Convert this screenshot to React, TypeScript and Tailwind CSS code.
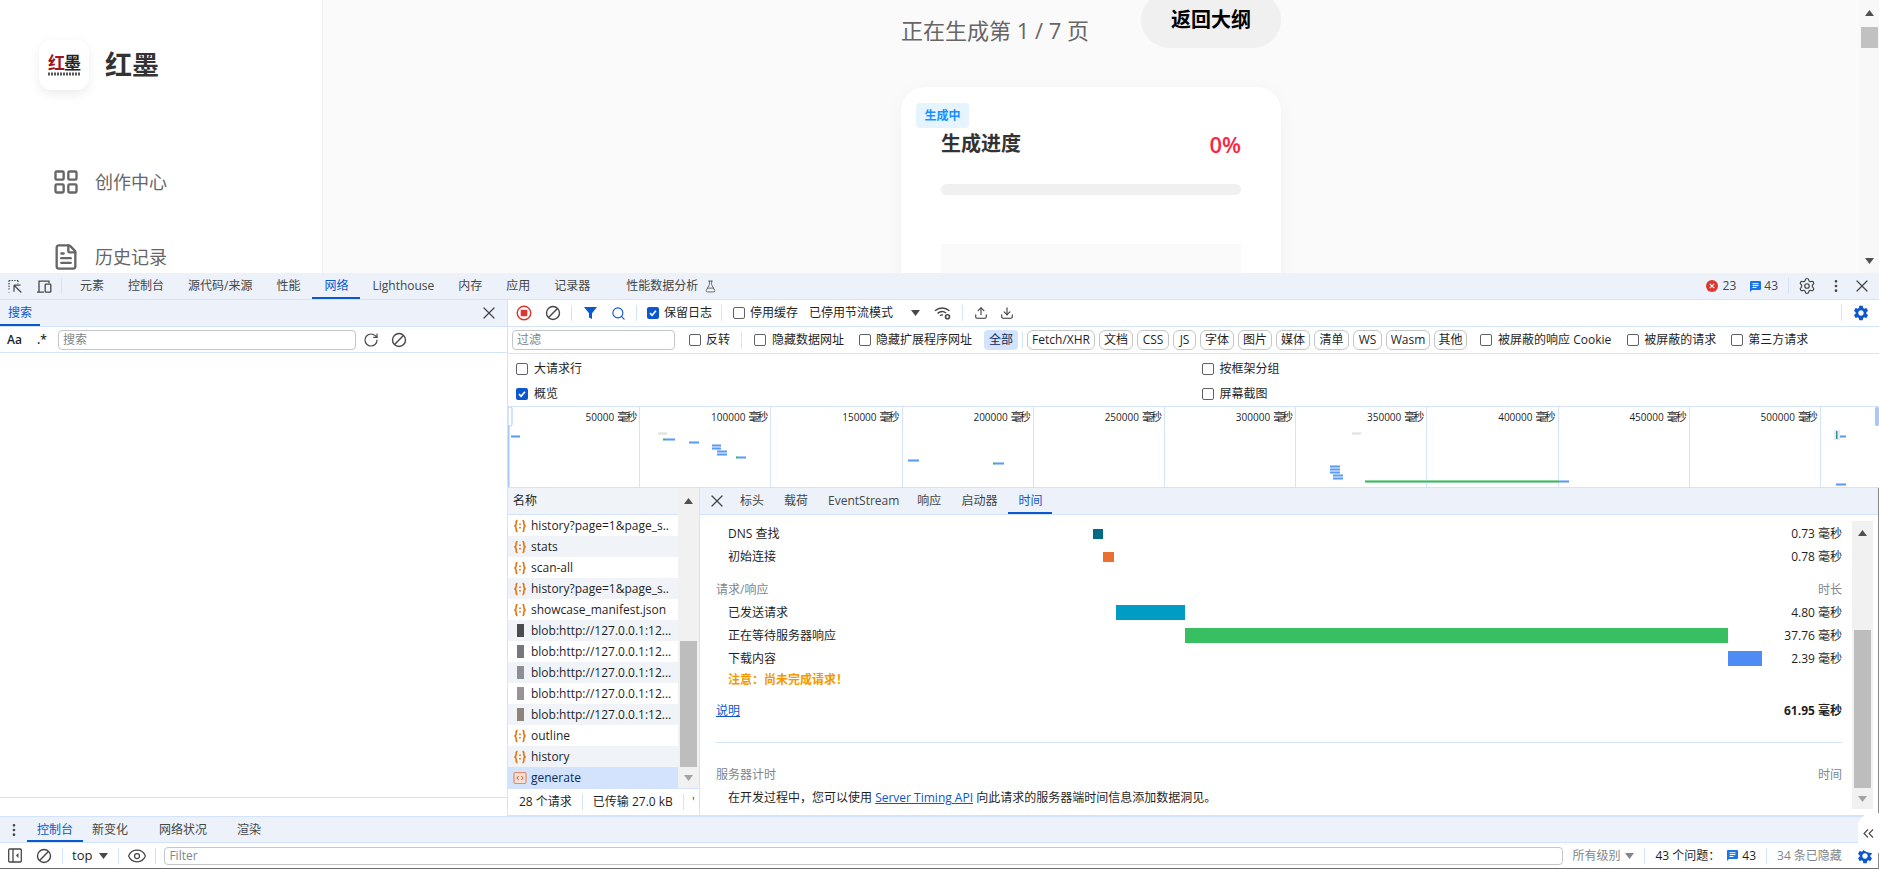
import React from 'react';
import { LayoutGrid, FileText, Settings, X, EllipsisVertical, Search, Upload, Download, RotateCw, Eye, FlaskConical } from 'lucide-react';
import { MdSettings } from 'react-icons/md';

const Check = ({ on = false, cls = '' }: { on?: boolean; cls?: string }) => (
  on ? (
    <span className={`flex h-[12px] w-[12px] shrink-0 items-center justify-center rounded-[2px] bg-[#0b57d0] ${cls}`}>
      <svg width="10" height="10" viewBox="0 0 11 11"><path d="M2.2 5.6 4.5 8l4.2-5" fill="none" stroke="#fff" strokeWidth="1.8" /></svg>
    </span>
  ) : (
    <span className={`block h-[12px] w-[12px] shrink-0 rounded-[2px] border border-[#5f6368] bg-white ${cls}`} />
  )
);

const Div = ({ cls = '' }: { cls?: string }) => <span className={`block h-4 w-px shrink-0 bg-[#d3e3fd] ${cls}`} />;

const Ban = ({ cls = '' }: { cls?: string }) => (
  <svg className={`shrink-0 ${cls}`} width="16" height="16" viewBox="0 0 16 16" fill="none" stroke="#474747" strokeWidth="1.4">
    <circle cx="8" cy="8" r="6.5" /><path d="M3.6 12.6 12.4 3.4" />
  </svg>
);

const Caret = ({ cls = '', color = '#474747' }: { cls?: string; color?: string }) => (
  <svg className={`shrink-0 ${cls}`} width="9" height="6" viewBox="0 0 9 6"><path d="M0 0h9L4.5 6z" fill={color} /></svg>
);

const Chat = ({ cls = '' }: { cls?: string }) => (
  <svg className={`shrink-0 ${cls}`} width="11" height="11" viewBox="0 0 11 11">
    <path d="M0 1a1 1 0 0 1 1-1h9a1 1 0 0 1 1 1v7a1 1 0 0 1-1 1H2l-2 2z" fill="#1a73e8" />
    <path d="M2.5 2.7h6M2.5 4.6h6M2.5 6.5h4" stroke="#fff" strokeWidth="1" />
  </svg>
);

const Xhr = () => (
  <svg className="shrink-0" width="14" height="14" viewBox="0 0 14 14" fill="none" stroke="#e8710a" strokeWidth="1.6">
    <path d="M4.6 1.5C2.8 1.5 3.2 3.2 3.2 4.6 3.2 6 2.6 6.8 1.4 7c1.2.2 1.8 1 1.8 2.4s-.4 3.1 1.4 3.1" />
    <path d="M9.4 1.5c1.8 0 1.4 1.7 1.4 3.1 0 1.4.6 2.2 1.8 2.4-1.2.2-1.8 1-1.8 2.4s.4 3.1-1.4 3.1" />
    <path d="M7 4.6v1.4M7 8v1.4" stroke="#e8710a" strokeWidth="1.6" />
  </svg>
);

const Gen = () => (
  <svg className="shrink-0" width="14" height="14" viewBox="0 0 14 14" fill="none">
    <rect x="1" y="1.5" width="12" height="11" rx="1.5" fill="#f6e0d5" stroke="#e58a63" strokeWidth="1.2" />
    <path d="M5.6 5 3.8 7l1.8 2M8.4 5l1.8 2-1.8 2" stroke="#c9582b" strokeWidth="1" />
  </svg>
);

const Thumb = ({ cls }: { cls: string }) => <span className={`ml-[4px] mr-[7px] block h-[13px] w-[7px] shrink-0 ${cls}`} />;

const topTabs = ['元素', '控制台', '源代码/来源', '性能', '网络', 'Lighthouse', '内存', '应用', '记录器'];

const pills = [
  { t: 'Fetch/XHR', w: 'w-[68px]' },
  { t: '文档', w: 'w-[34px]' },
  { t: 'CSS', w: 'w-[32px]' },
  { t: 'JS', w: 'w-[23px]' },
  { t: '字体', w: 'w-[34px]' },
  { t: '图片', w: 'w-[34px]' },
  { t: '媒体', w: 'w-[34px]' },
  { t: '清单', w: 'w-[35px]' },
  { t: 'WS', w: 'w-[29px]' },
  { t: 'Wasm', w: 'w-[44px]' },
  { t: '其他', w: 'w-[33px]' },
];

const marks = ['50000', '100000', '150000', '200000', '250000', '300000', '350000', '400000', '450000', '500000'];

const B = 'b';
const bars: [number, number, number, string][] = [
  [511, 9, 435, B], [658, 9, 432, 'x'], [663, 2, 438, 'g'], [665, 10, 438, B], [689, 10, 441, B],
  [712, 9, 444, B], [712, 9, 447, B], [717, 10, 450, B], [717, 10, 453, B], [736, 2, 456, 'g'], [738, 8, 456, B],
  [908, 11, 459, B], [993, 2, 462, 'g'], [995, 9, 462, B], [1352, 9, 432, 'x'],
  [1330, 10, 465, B], [1330, 10, 468, B], [1330, 10, 471, B], [1333, 10, 474, B], [1333, 10, 477, B],
  [1365, 194, 480, 'g'], [1559, 10, 480, B], [1836, 10, 483, B], [1840, 6, 435, B],
];
const barBg = (k: string) => (k === 'b' ? '#a9c9fb' : k === 'g' ? '#8fd8a4' : '#ececec');
const barFg = (k: string) => (k === 'b' ? '#5b9bf8' : k === 'g' ? '#3fb45e' : '#e2e2e2');

type Row = { t: string; k: 'xhr' | 'blob' | 'gen'; th?: string };
const rows: Row[] = [
  { t: 'history?page=1&page_s..', k: 'xhr' },
  { t: 'stats', k: 'xhr' },
  { t: 'scan-all', k: 'xhr' },
  { t: 'history?page=1&page_s..', k: 'xhr' },
  { t: 'showcase_manifest.json', k: 'xhr' },
  { t: 'blob:http://127.0.0.1:12...', k: 'blob', th: 'bg-[#4a4a4f]' },
  { t: 'blob:http://127.0.0.1:12...', k: 'blob', th: 'bg-[#77777d]' },
  { t: 'blob:http://127.0.0.1:12...', k: 'blob', th: 'bg-[#8d8d94]' },
  { t: 'blob:http://127.0.0.1:12...', k: 'blob', th: 'bg-[#9a9298]' },
  { t: 'blob:http://127.0.0.1:12...', k: 'blob', th: 'bg-[#8f8278]' },
  { t: 'outline', k: 'xhr' },
  { t: 'history', k: 'xhr' },
  { t: 'generate', k: 'gen' },
];

const rowBg = (i: number, sel: boolean) => (sel ? 'bg-[#d3e3fd] text-[#0a2a5c]' : i % 2 === 0 ? 'bg-white' : 'bg-[#f0f4f9]');

const VBar = ({ cls, thumb, up, down }: { cls: string; thumb: string; up: string; down: string }) => (
  <div className={`flex shrink-0 flex-col items-center bg-[#f1f1f1] ${cls}`}>
    <div className={`flex w-full items-center justify-center ${up}`}>
      <Caret cls="rotate-180" color="#505050" />
    </div>
    <div className="flex-1" />
    <div className={`w-[17px] bg-[#bdbdbd] ${thumb}`} />
    <div className={`flex w-full items-center justify-center ${down}`}>
      <Caret color="#a3a3a3" />
    </div>
  </div>
);

export default function App() {
  return (
    <div className="relative flex h-[869px] w-[1879px] flex-col overflow-hidden bg-white font-['Open_Sans','Noto_Sans_CJK_SC',sans-serif] text-[12px] text-[#1f1f1f]">
      {/* page */}
      <div className="flex h-[273px] shrink-0 overflow-hidden">
        <aside className="w-[323px] shrink-0 border-r border-[#f0f0f0] bg-white pl-[39px] pt-[40px]">
          <div className="flex items-center">
            <div className="flex h-[50px] w-[50px] flex-col items-center justify-center rounded-[12px] bg-white shadow-[0_4px_12px_rgba(0,0,0,0.08)]">
              <div className="flex h-[17px] items-center text-[17px] font-bold leading-none tracking-[-1px]">
                <span className="text-[#a3161f]">红</span><span className="text-[#222]">墨</span>
              </div>
              <svg width="33" height="4" viewBox="0 0 33 4" className="mt-[1px]"><path d="M0 2h33" stroke="#555" strokeWidth="3" strokeDasharray="2 1" /></svg>
            </div>
            <div className="ml-[16px] text-[27px] font-semibold leading-[34px] text-[#333]">红墨</div>
          </div>
          <div className="ml-[13px] mt-[76px] flex h-[32px] items-center text-[#666]">
            <LayoutGrid size={28} strokeWidth={2} className="shrink-0" />
            <span className="ml-[15px] text-[18px]">创作中心</span>
          </div>
          <div className="ml-[13px] mt-[43px] flex h-[32px] items-center text-[#666]">
            <FileText size={28} strokeWidth={2} className="shrink-0" />
            <span className="ml-[15px] text-[18px]">历史记录</span>
          </div>
        </aside>
        <main className="min-w-0 flex-1 bg-[#fafafa]">
          <div className="mx-auto w-[380px]">
            <div className="-mt-[8px] flex h-[56px] items-start justify-between">
              <div className="mt-[23px] text-[22px] leading-[30px] text-[#666]">正在生成第 1 / 7 页</div>
              <div className="flex h-[56px] w-[140px] items-center justify-center rounded-full bg-[#f0f0f0] text-[20px] font-bold text-black">返回大纲</div>
            </div>
            <div className="relative mt-[39px] h-[300px] rounded-[24px] bg-white px-10 pt-[43px] shadow-[0_4px_20px_rgba(0,0,0,0.04)]">
              <span className="absolute left-[15px] top-[16px] flex h-[25px] w-[53px] items-center justify-center rounded-[4px] bg-[#e6f4ff] text-[12px] font-semibold text-[#1890ff]">生成中</span>
              <div className="flex h-[28px] items-center justify-between">
                <span className="text-[20px] font-semibold text-[#333]">生成进度</span>
                <span className="text-[22px] font-semibold text-[#ff2442]">0%</span>
              </div>
              <div className="mt-[26px] h-[11px] rounded-full bg-[#f0f0f0]" />
              <div className="mt-[49px] h-[100px] bg-[#fafafa]" />
            </div>
          </div>
        </main>
        <div className="flex w-[20px] shrink-0 flex-col items-center bg-[#f8f8f8]">
          <div className="flex h-[25px] items-center justify-center"><Caret cls="rotate-180" color="#505050" /></div>
          <div className="mt-[2px] h-[21px] w-[17px] bg-[#c1c1c1]" />
          <div className="flex-1" />
          <div className="flex h-[25px] items-center justify-center"><Caret color="#505050" /></div>
        </div>
      </div>

      {/* devtools tabs */}
      <div className="flex h-[27px] shrink-0 items-stretch border-b border-[#d3e3fd] bg-[#ecf1fa] text-[#444746]">
        <div className="flex items-center pl-[8px]">
          <svg width="15" height="15" viewBox="0 0 15 15" fill="none" stroke="#474747" strokeWidth="1.2">
            <path d="M1 1.5h9M1 1.5v9M1 13v.5M10 1.5v3" strokeDasharray="1.4 1.2" />
            <path d="M6 6.2h6.5M6 6.2v6.5M6.3 6.5l7 7" />
          </svg>
          <svg className="ml-[13px]" width="16" height="15" viewBox="0 0 16 15" fill="none" stroke="#474747" strokeWidth="1.3">
            <path d="M1 13.2h7M3 13V2.2h10v2" />
            <rect x="9.2" y="5.2" width="5.6" height="8" rx=".6" />
          </svg>
          <Div cls="ml-[9px]" />
        </div>
        <div className="ml-[6px] flex items-stretch">
          {topTabs.map((t) => (
            <div key={t} className={`flex items-center px-3 ${t === '网络' ? 'border-b-2 border-[#0b57d0] pt-[2px] text-[#0b57d0]' : ''}`}>{t}</div>
          ))}
          <div className="ml-[24px] flex items-center">性能数据分析<FlaskConical size={13} strokeWidth={1.4} className="ml-[6px]" /></div>
        </div>
        <div className="ml-auto flex items-center pr-[7px]">
          <svg width="12" height="12" viewBox="0 0 12 12"><circle cx="6" cy="6" r="6" fill="#dc362e" /><path d="M3.8 3.8l4.4 4.4M8.2 3.8 3.8 8.2" stroke="#fff" strokeWidth="1.1" /></svg>
          <span className="ml-[5px]">23</span>
          <Chat cls="ml-[14px]" />
          <span className="ml-[3px]">43</span>
          <Div cls="ml-[10px]" />
          <Settings size={18} strokeWidth={1.6} className="ml-[9px]" />
          <EllipsisVertical size={16} strokeWidth={2} className="ml-[12px]" />
          <X size={20} strokeWidth={1.5} className="ml-[8px]" />
        </div>
      </div>

      {/* devtools body */}
      <div className="flex h-[516px] shrink-0">
        {/* search drawer */}
        <div className="flex w-[508px] shrink-0 flex-col border-r border-[#d3e3fd]">
          <div className="flex h-[27px] shrink-0 items-stretch justify-between border-b border-[#d3e3fd] bg-[#ecf1fa] pr-[8px]">
            <span className="flex w-[40px] items-center justify-center border-b-2 border-[#0b57d0] pt-[2px] text-[#0b57d0]">搜索</span>
            <span className="flex items-center"><X size={20} strokeWidth={1.5} className="text-[#474747]" /></span>
          </div>
          <div className="flex h-[26px] shrink-0 items-center border-b border-[#d3e3fd] pl-[7px]">
            <span className="w-[16px] font-semibold">Aa</span>
            <span className="ml-[14px] w-[11px] font-semibold">.*</span>
            <div className="ml-[10px] flex h-[20px] w-[298px] items-center rounded-[4px] border border-[#c4c7c5] pl-[4px] text-[#80868b]">搜索</div>
            <RotateCw size={16} strokeWidth={1.8} className="ml-[7px] text-[#474747]" />
            <Ban cls="ml-[12px]" />
          </div>
          <div className="flex-1" />
          <div className="h-[19px] shrink-0 border-t border-[#d3e3fd]" />
        </div>

        {/* network */}
        <div className="flex min-w-0 flex-1 flex-col">
          <div className="flex h-[27px] shrink-0 items-center border-b border-[#d3e3fd] pl-[8px] pr-[9px]">
            <svg className="shrink-0" width="16" height="16" viewBox="0 0 16 16"><circle cx="8" cy="8" r="6.8" fill="none" stroke="#dc362e" strokeWidth="1.4" /><rect x="4.7" y="4.7" width="6.6" height="6.6" rx="1" fill="#dc362e" /></svg>
            <Ban cls="ml-[13px]" />
            <Div cls="ml-[10px]" />
            <svg className="ml-[12px] shrink-0" width="13" height="14" viewBox="0 0 13 14"><path d="M0 1h13L8 7.2V13l-3-1.5V7.2z" fill="#0b57d0" /></svg>
            <Search size={15} strokeWidth={1.8} className="ml-[14px] shrink-0 text-[#0b57d0]" />
            <Div cls="ml-[10px]" />
            <Check on cls="ml-[10px]" />
            <span className="ml-[5px] whitespace-nowrap">保留日志</span>
            <Div cls="ml-[9px]" />
            <Check cls="ml-[11px]" />
            <span className="ml-[5px] whitespace-nowrap">停用缓存</span>
            <span className="ml-[11px] whitespace-nowrap">已停用节流模式</span>
            <Caret cls="ml-[18px]" />
            <svg className="ml-[14px] shrink-0" width="17" height="14" viewBox="0 0 17 14" fill="none" stroke="#474747" strokeWidth="1.4">
              <path d="M1 4.8a10.5 10.5 0 0 1 14.4 0M3.6 7.4a7 7 0 0 1 8.6-.4M6 9.8a3.4 3.4 0 0 1 3-.8" />
              <circle cx="13.5" cy="10.8" r="2" strokeWidth="1.6" />
            </svg>
            <Div cls="ml-[11px]" />
            <Upload size={14} strokeWidth={1.8} className="ml-[11px] shrink-0 text-[#333]" />
            <Download size={14} strokeWidth={1.8} className="ml-[12px] shrink-0 text-[#333]" />
            <Div cls="ml-auto" />
            <MdSettings size={18} className="ml-[10px] shrink-0 text-[#0b57d0]" />
          </div>

          <div className="flex h-[27px] shrink-0 items-center border-b border-[#d3e3fd] pl-[4px]">
            <div className="flex h-[20px] w-[163px] shrink-0 items-center rounded-[4px] border border-[#c4c7c5] pl-[4px] text-[#80868b]">过滤</div>
            <Check cls="ml-[14px]" />
            <span className="ml-[5px] whitespace-nowrap">反转</span>
            <Div cls="ml-[11px]" />
            <Check cls="ml-[12px]" />
            <span className="ml-[6px] whitespace-nowrap">隐藏数据网址</span>
            <Check cls="ml-[15px]" />
            <span className="ml-[5px] whitespace-nowrap">隐藏扩展程序网址</span>
            <span className="ml-[12px] flex h-[20px] w-[34px] shrink-0 items-center justify-center rounded-[4px] bg-[#d3e3fd] text-[#0a2a5c]">全部</span>
            <Div cls="ml-[4px]" />
            <div className="ml-[4px] flex gap-1">
              {pills.map((p) => (
                <span key={p.t} className={`flex h-[20px] shrink-0 items-center justify-center rounded-[6px] border border-[#c4c7c5] ${p.w}`}>{p.t}</span>
              ))}
            </div>
            <Check cls="ml-[13px]" />
            <span className="ml-[6px] whitespace-nowrap">被屏蔽的响应 Cookie</span>
            <Check cls="ml-[16px]" />
            <span className="ml-[5px] whitespace-nowrap">被屏蔽的请求</span>
            <Check cls="ml-[15px]" />
            <span className="ml-[5px] whitespace-nowrap">第三方请求</span>
          </div>

          <div className="grid h-[53px] shrink-0 grid-cols-2 grid-rows-2 border-b border-[#d3e3fd] pt-[2px]">
            <div className="flex items-center pl-[8px]"><Check /><span className="ml-[6px]">大请求行</span></div>
            <div className="flex items-center pl-[8px]"><Check /><span className="ml-[6px]">按框架分组</span></div>
            <div className="flex items-center pl-[8px]"><Check on /><span className="ml-[6px]">概览</span></div>
            <div className="flex items-center pl-[8px]"><Check /><span className="ml-[6px]">屏幕截图</span></div>
          </div>

          {/* overview */}
          <div className="relative flex h-[81px] shrink-0 border-b border-[#d3e3fd] pl-px">
            {marks.map((m) => (
              <div key={m} className="flex w-[131.2px] shrink-0 items-start justify-end whitespace-nowrap border-r border-[#d3e3fd] pr-[2px] pt-[2px] text-[10px] leading-[16px] text-[#1f1f1f]">
                {m}<span className="ml-[3px] text-[11px] tracking-[-2px] pr-[2px]">毫秒</span>
              </div>
            ))}
            <svg className="absolute inset-0 h-full w-full" viewBox="0 0 1371 80" preserveAspectRatio="none">
              <rect x="0" y="0" width="1.5" height="80" fill="#a8c7fa" />
              {bars.map((b, i) => (
                <g key={i}>
                  <rect x={b[0] - 508} y={b[2] - 407} width={b[1]} height="3" fill={barBg(b[3])} />
                  <rect x={b[0] - 508} y={b[2] - 406} width={b[1]} height="1" fill={barFg(b[3])} />
                </g>
              ))}
              <rect x="1326" y="23" width="6" height="10" fill="#e3ecfb" />
              <rect x="1328" y="24" width="1.5" height="8" fill="#3f8f7a" />
              <rect x="0" y="0" width="4" height="19" rx="1.5" fill="#fff" stroke="#a8c7fa" />
              <rect x="1367" y="0" width="4" height="19" rx="1.5" fill="#a8c7fa" />
            </svg>
          </div>

          {/* split */}
          <div className="flex h-[328px] shrink-0 border-b border-[#d3e3fd]">
            <div className="flex w-[192px] shrink-0 flex-col border-r border-[#d3e3fd]">
              <div className="flex min-h-0 flex-1">
                <div className="flex w-[170px] shrink-0 flex-col">
                  <div className="flex h-[27px] shrink-0 items-center border-b border-[#d3e3fd] bg-[#f0f4f9] pl-[5px]">名称</div>
                  {rows.map((r, i) => (
                    <div key={i} className={`flex h-[21px] shrink-0 items-center overflow-hidden whitespace-nowrap pl-[5px] ${rowBg(i, r.k === 'gen')}`}>
                      {r.k === 'xhr' && <span className="mr-[4px] flex"><Xhr /></span>}
                      {r.k === 'gen' && <span className="mr-[4px] flex"><Gen /></span>}
                      {r.k === 'blob' && <Thumb cls={r.th ?? ''} />}
                      {r.t}
                    </div>
                  ))}
                </div>
                <VBar cls="w-[21px]" thumb="h-[126px]" up="h-[26px]" down="h-[21px]" />
              </div>
              <div className="flex h-[27px] shrink-0 items-center border-t border-[#d3e3fd] pl-[11px]">
                <span className="whitespace-nowrap">28 个请求</span>
                <Div cls="ml-[10px]" />
                <span className="ml-[10px] whitespace-nowrap">已传输 27.0 kB</span>
                <Div cls="ml-[10px]" />
                <span className="ml-[8px] leading-none text-[#444746]">'</span>
              </div>
            </div>

            <div className="flex min-w-0 flex-1 flex-col">
              <div className="flex h-[27px] shrink-0 items-stretch border-b border-[#d3e3fd] bg-[#ecf1fa] text-[#444746]">
                <div className="flex w-[27px] items-center justify-end"><X size={20} strokeWidth={1.5} /></div>
                <div className="flex items-center pl-[13px] pr-[10px]">标头</div>
                <div className="flex items-center px-[10px]">载荷</div>
                <div className="flex items-center pl-[10px] pr-[8px]">EventStream</div>
                <div className="flex items-center px-[10px]">响应</div>
                <div className="flex items-center px-[10px]">启动器</div>
                <div className="ml-[1px] flex items-center border-b-2 border-[#0b57d0] px-[10px] pt-[2px] text-[#0b57d0]">时间</div>
              </div>
              <div className="flex min-h-0 flex-1">
                <div className="w-[1152px] shrink-0 pl-[16px] pr-[10px] pt-[7px]">
                  <div className="flex h-[23px] items-center pl-[12px]">
                    <span className="w-[365px] shrink-0">DNS 查找</span>
                    <div className="w-[669px] shrink-0"><div className="h-[10px] w-[10px] bg-[#006b85]" /></div>
                    <span className="ml-auto whitespace-nowrap">0.73 毫秒</span>
                  </div>
                  <div className="flex h-[23px] items-center pl-[12px]">
                    <span className="w-[365px] shrink-0">初始连接</span>
                    <div className="w-[669px] shrink-0"><div className="ml-[10px] h-[10px] w-[11px] bg-[#e97030]" /></div>
                    <span className="ml-auto whitespace-nowrap">0.78 毫秒</span>
                  </div>
                  <div className="mt-[10px] flex h-[23px] items-center justify-between text-[#80868b]">
                    <span>请求/响应</span><span>时长</span>
                  </div>
                  <div className="flex h-[23px] items-center pl-[12px]">
                    <span className="w-[365px] shrink-0">已发送请求</span>
                    <div className="w-[669px] shrink-0"><div className="ml-[23px] h-[15px] w-[69px] bg-[#009cc3]" /></div>
                    <span className="ml-auto whitespace-nowrap">4.80 毫秒</span>
                  </div>
                  <div className="flex h-[23px] items-center pl-[12px]">
                    <span className="w-[365px] shrink-0">正在等待服务器响应</span>
                    <div className="w-[669px] shrink-0"><div className="ml-[92px] h-[15px] w-[543px] bg-[#37bf61]" /></div>
                    <span className="ml-auto whitespace-nowrap">37.76 毫秒</span>
                  </div>
                  <div className="flex h-[23px] items-center pl-[12px]">
                    <span className="w-[365px] shrink-0">下载内容</span>
                    <div className="w-[669px] shrink-0"><div className="ml-[635px] h-[15px] w-[34px] bg-[#4e8bf2]" /></div>
                    <span className="ml-auto whitespace-nowrap">2.39 毫秒</span>
                  </div>
                  <div className="flex h-[20px] items-center pl-[12px] font-bold text-[#f29900]">注意：尚未完成请求！</div>
                  <div className="mt-[10px] flex h-[22px] items-center justify-between">
                    <span className="text-[#0b57d0] underline">说明</span>
                    <span className="font-bold">61.95 毫秒</span>
                  </div>
                  <div className="mt-[20px] h-px bg-[#d3e3fd]" />
                  <div className="mt-[21px] flex h-[22px] items-center justify-between text-[#80868b]">
                    <span>服务器计时</span><span>时间</span>
                  </div>
                  <div className="mt-[1px] flex h-[22px] items-center pl-[12px]">
                    在开发过程中，您可以使用&nbsp;<span className="text-[#0b57d0] underline">Server Timing API</span>&nbsp;向此请求的服务器端时间信息添加数据洞见。
                  </div>
                </div>
                <VBar cls="mt-[6px] mb-[6px] w-[21px]" thumb="h-[158px]" up="h-[24px]" down="h-[21px]" />
              </div>
            </div>
          </div>
        </div>
      </div>

      {/* console drawer */}
      <div className="flex h-[27px] shrink-0 items-stretch border-b border-t border-[#d3e3fd] bg-[#ecf1fa] text-[#444746]">
        <div className="flex w-[27px] items-center justify-center"><EllipsisVertical size={16} strokeWidth={2} /></div>
        <div className="flex w-[56px] items-center justify-center border-b-2 border-[#0b57d0] pt-[2px] text-[#0b57d0]">控制台</div>
        <div className="ml-[9px] flex items-center">新变化</div>
        <div className="ml-[31px] flex items-center">网络状况</div>
        <div className="ml-[30px] flex items-center">渲染</div>
      </div>
      <div className="flex h-[26px] shrink-0 items-center border-b border-[#6b6b6b] pl-[8px]">
        <svg className="shrink-0" width="14" height="15" viewBox="0 0 14 15" fill="none" stroke="#474747" strokeWidth="1.3">
          <rect x=".7" y="1" width="12.6" height="13" rx="1" /><path d="M5 1v13" /><path d="M10.5 5 8 7.5l2.5 2.5z" fill="#474747" stroke="none" />
        </svg>
        <Ban cls="ml-[14px]" />
        <Div cls="ml-[10px]" />
        <span className="ml-[9px] text-[13px]">top</span>
        <Caret cls="ml-[7px]" />
        <Div cls="ml-[10px]" />
        <Eye size={20} strokeWidth={1.5} className="ml-[8px] shrink-0 text-[#474747]" />
        <Div cls="ml-[8px]" />
        <div className="ml-[8px] flex h-[18px] w-[1399px] shrink-0 items-center rounded-[4px] border border-[#c4c7c5] pl-[4px] text-[#80868b]">Filter</div>
        <span className="ml-[9px] whitespace-nowrap text-[#80868b]">所有级别</span>
        <Caret cls="ml-[5px]" color="#80868b" />
        <Div cls="ml-[10px]" />
        <span className="ml-[10px] whitespace-nowrap">43 个问题：</span>
        <Chat cls="ml-[7px]" />
        <span className="ml-[4px]">43</span>
        <Div cls="ml-[10px]" />
        <span className="ml-[10px] whitespace-nowrap text-[#80868b]">34 条已隐藏</span>
        <MdSettings size={18} className="ml-[14px] shrink-0 text-[#0b57d0]" />
      </div>

      {/* right edge + floating handle */}
      <div className="absolute bottom-0 right-0 top-[488px] w-px bg-[#8a8a8a]" />
      <div className="absolute right-0 top-[813px] flex h-[40px] w-[21px] items-center justify-center rounded-l-[14px] bg-white text-[#444746]">
        <svg width="11" height="9" viewBox="0 0 11 9" fill="none" stroke="#444746" strokeWidth="1.1"><path d="M5 .5 1 4.5l4 4M10 .5l-4 4 4 4" /></svg>
      </div>
    </div>
  );
}
